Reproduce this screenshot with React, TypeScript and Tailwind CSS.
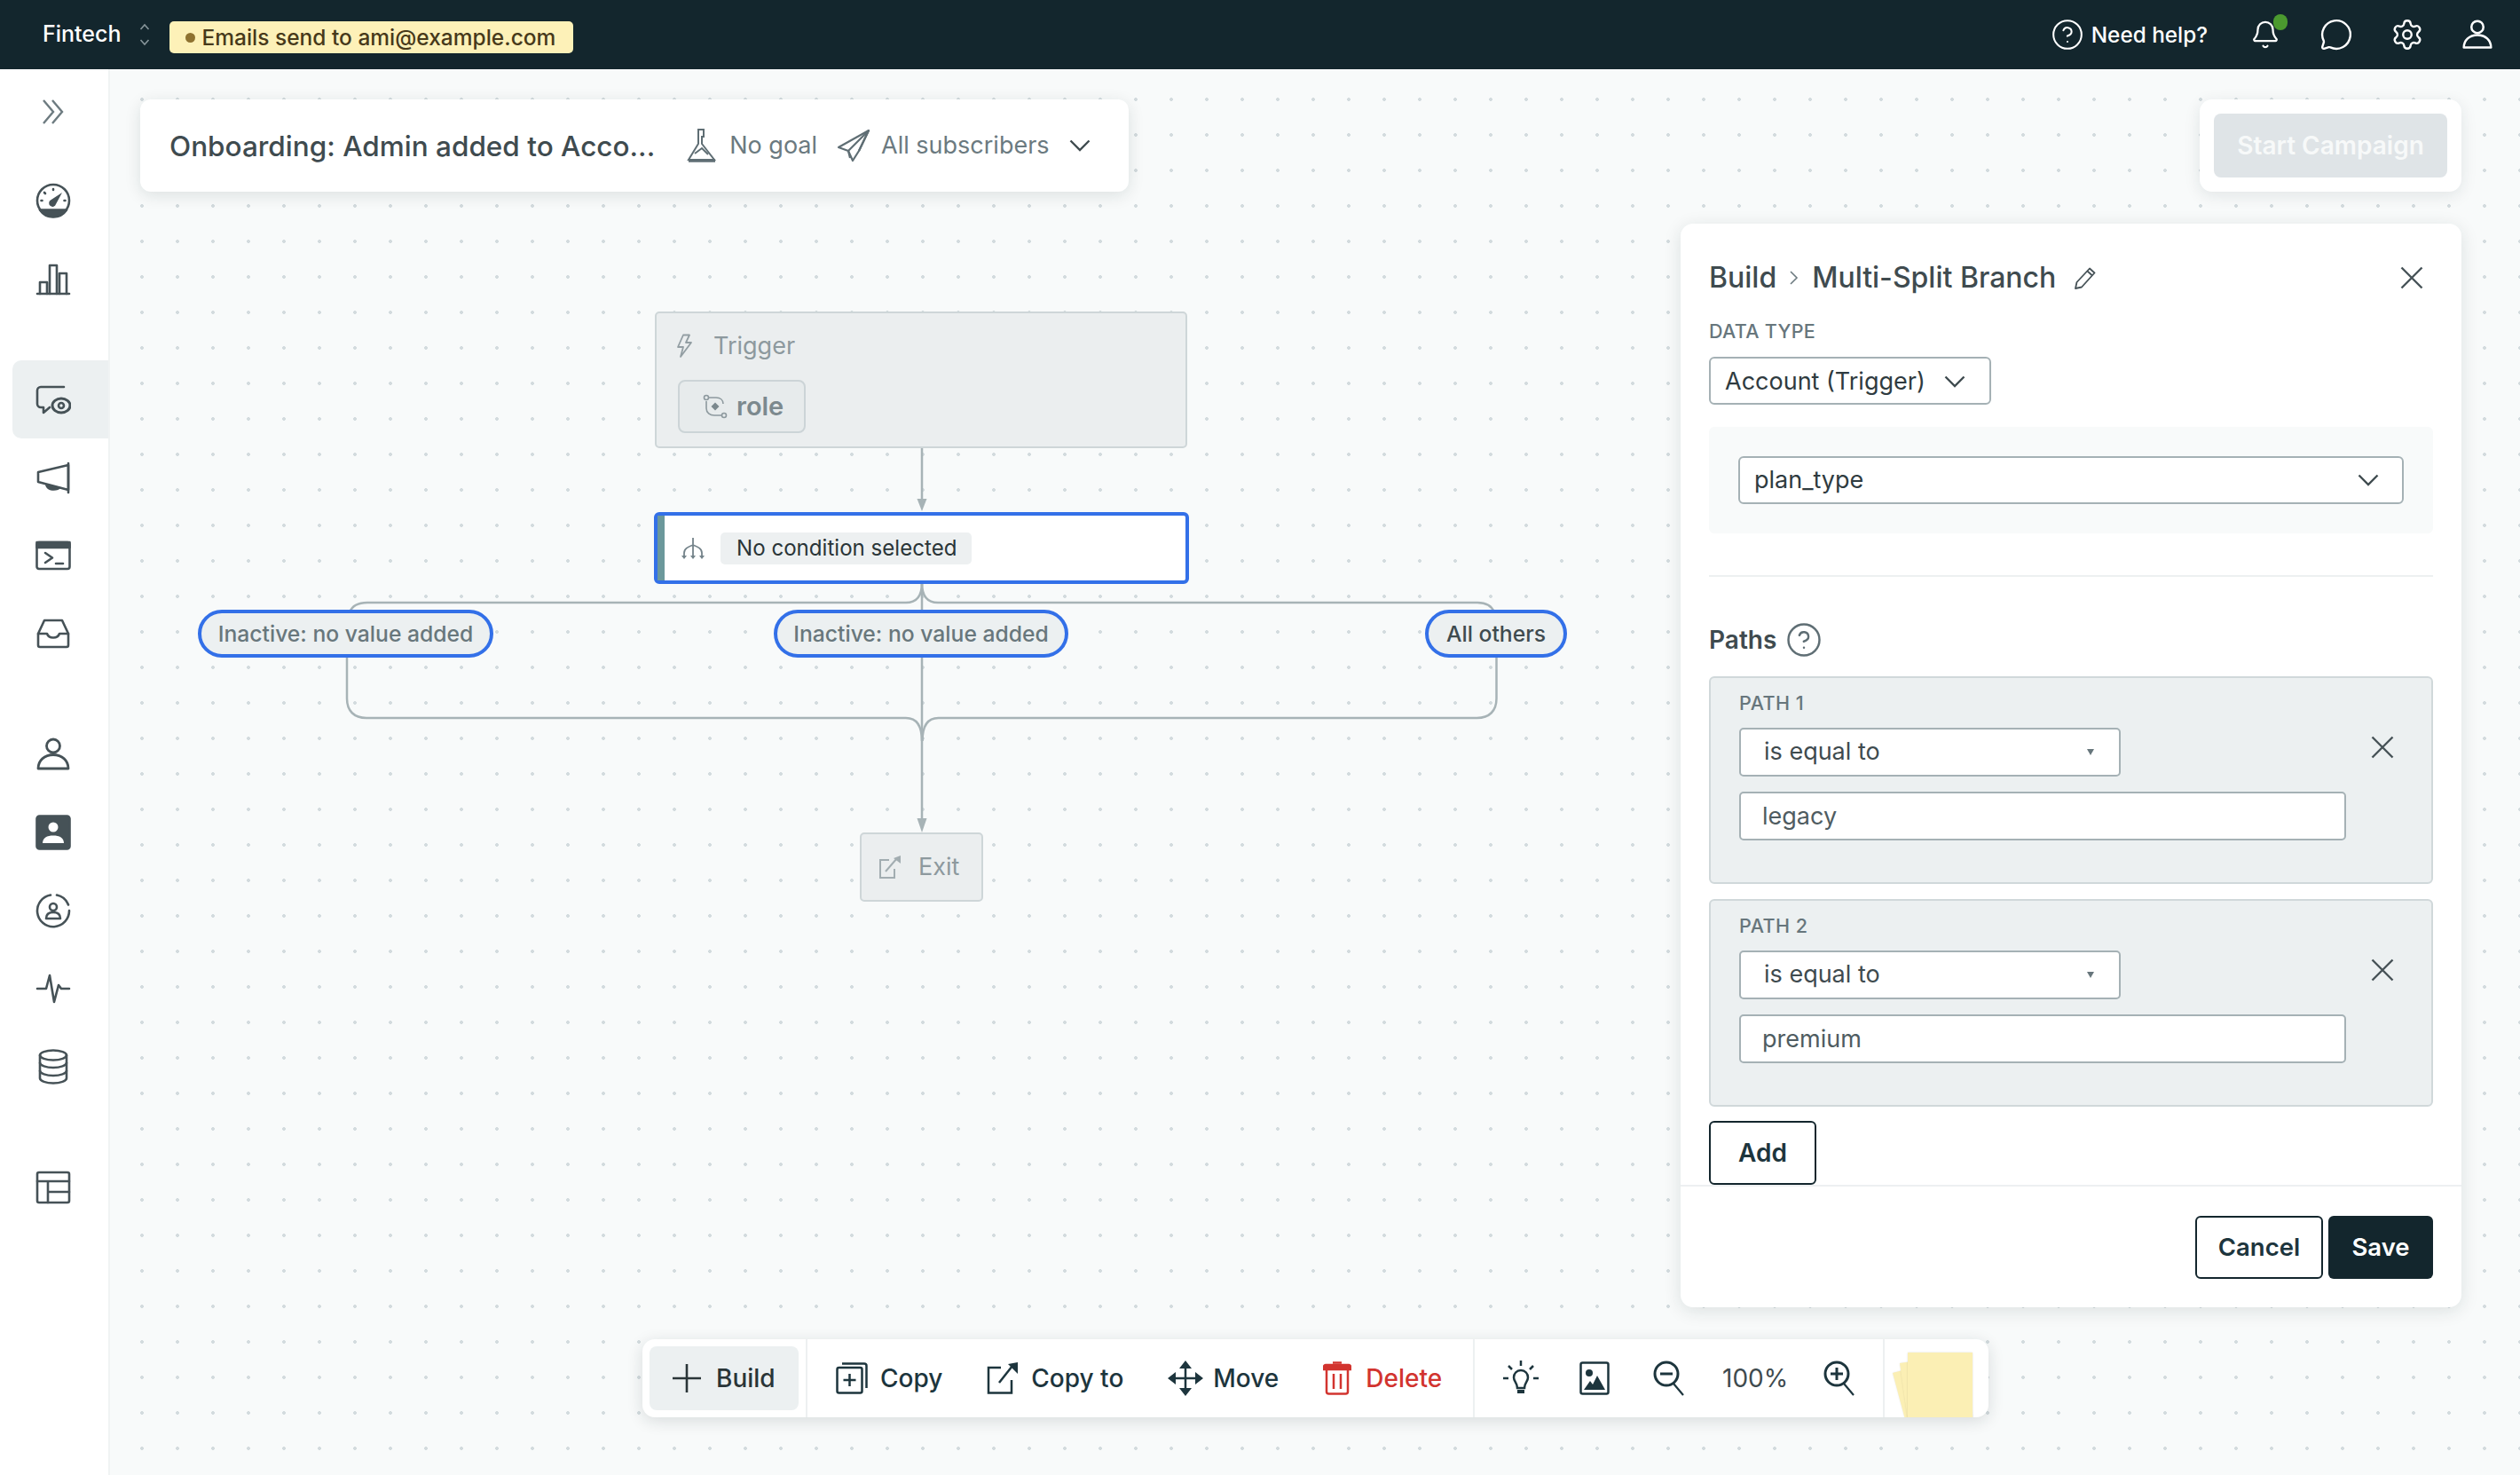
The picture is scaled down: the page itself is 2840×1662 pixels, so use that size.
import { ReactNode } from 'react';
import { Bell, CircleHelp, MessageCircle, Settings } from 'lucide-react';

const NAV = '#465257';
const TOOL = '#1d353d';

function NavSvg({ children }: { children: ReactNode }) {
  return (
    <svg width="40" height="40" viewBox="0 0 40 40" fill="none" stroke={NAV} strokeWidth="2.6" strokeLinecap="round" strokeLinejoin="round">
      {children}
    </svg>
  );
}

function UserGlyph({ size, color }: { size: number; color: string }) {
  return (
    <svg width={size} height={size} viewBox="0 0 40 40" fill="none" stroke={color} strokeWidth="2.8" strokeLinejoin="round">
      <circle cx="20" cy="10.5" r="7.5" />
      <path d="M3 36c0-9 7-15.500 17-15.500s17 6.500 17 15.500z" />
    </svg>
  );
}

const navGroups: ReactNode[][] = [
  [
    <NavSvg key="gauge">
      <circle cx="20" cy="20" r="18" />
      <path d="M5 30.500a18 18 0 0 0 30 0z" fill={NAV} />
      <path d="M30 11 23 24a4 4 0 1 1-6-4.500z" fill={NAV} stroke="none" />
      <path d="M20 7v1M10 11l1 1M6.500 20h1M32.500 20h1" />
    </NavSvg>,
    <NavSvg key="bars">
      <path d="M2 37h36" />
      <path d="M5 37V24h8v13M16 37V5h8v32M27 37V14h8v23" />
    </NavSvg>,
  ],
  [
    <NavSvg key="watch">
      <path d="M32 6H6a4 4 0 0 0-4 4v15a4 4 0 0 0 4 4h3v6l7-6" />
      <ellipse cx="29" cy="27" rx="10" ry="8" strokeWidth="3" fill="#ecf0f1" />
      <circle cx="29" cy="27" r="3" />
    </NavSvg>,
    <NavSvg key="megaphone">
      <path d="M37 4v33" />
      <path d="M3 14 37 6v28L3 25z" />
      <path d="M11 28c1 8 14 9 18 3z" fill={NAV} stroke="none" />
    </NavSvg>,
    <NavSvg key="terminal">
      <rect x="1.500" y="5" width="37" height="30" rx="2.500" />
      <path d="M1.500 5h37v6h-37z" fill={NAV} />
      <path d="m11 17 8 5.500-8 5.500M23 29h8" />
    </NavSvg>,
    <NavSvg key="inbox">
      <path d="M3 20 10 5h20l7 15v13a2 2 0 0 1-2 2H5a2 2 0 0 1-2-2z" />
      <path d="M3 20h10c2 6 12 6 14 0h10" />
    </NavSvg>,
  ],
  [
    <UserGlyph key="user" size={40} color={NAV} />,
    <NavSvg key="contact">
      <rect x="1.500" y="1.500" width="37" height="37" rx="3" fill={NAV} />
      <circle cx="20" cy="14" r="5.500" fill="#fff" stroke="none" />
      <path d="M8 32c0-6 5-8.500 12-8.500S32 26 32 32z" fill="#fff" stroke="none" />
    </NavSvg>,
    <NavSvg key="segment">
      <path d="M17 2.500A18 18 0 1 0 38 20" />
      <path d="M24 2.600A18 18 0 0 1 37 13.500" />
      <circle cx="20" cy="16" r="4" />
      <path d="M12 29c0-5 3-7 8-7s8 2 8 7z" />
    </NavSvg>,
    <NavSvg key="pulse">
      <path d="M2 20h10l4-15 5 30 5-19 3 4h9" />
    </NavSvg>,
    <NavSvg key="db">
      <ellipse cx="20" cy="7" rx="15" ry="5.500" />
      <path d="M5 7v26c0 3 7 5.500 15 5.500S35 36 35 33V7" />
      <path d="M5 15.500c0 3 7 5.500 15 5.500s15-2.500 15-5.500M5 24.500c0 3 7 5.500 15 5.500s15-2.500 15-5.500" />
    </NavSvg>,
  ],
  [
    <NavSvg key="table">
      <rect x="2" y="3" width="36" height="34" rx="2" />
      <path d="M2 13h36M14 13v24M14 25h24" />
    </NavSvg>,
  ],
];

function Sidebar() {
  return (
    <aside className="w-[124px] shrink-0 border-r-2 border-[#f0f3f3] bg-white pt-[4px]">
      <div className="ml-[14px] flex h-[88px] items-center pl-[34px]">
        <svg width="24" height="28" viewBox="0 0 24 28" fill="none" stroke="#6d7b80" strokeWidth="2.4">
          <path d="M1 1l11 13L1 27M11 1l11 13-11 13" />
        </svg>
      </div>
      <div className="mt-[12px] flex flex-col gap-[48px]">
        {navGroups.map((group, g) => (
          <div key={g} className="flex flex-col">
            {group.map((icon, i) => (
              <div
                key={i}
                className={`ml-[14px] flex h-[88px] items-center rounded-l-[10px] pl-[26px] ${g === 1 && i === 0 ? 'bg-[#ecf0f1]' : ''}`}
              >
                {icon}
              </div>
            ))}
          </div>
        ))}
      </div>
    </aside>
  );
}

function TopBar() {
  return (
    <header className="flex h-[78px] shrink-0 items-center bg-[#13262d] pl-[48px] pr-[30px] text-white">
      <span className="text-[25px] font-medium">Fintech</span>
      <svg className="ml-[20px]" width="12" height="26" viewBox="0 0 12 26" fill="none" stroke="#87959a" strokeWidth="1.6">
        <path d="M1.500 7 6 2l4.500 5M1.500 19 6 24l4.500-5" />
      </svg>
      <div className="ml-[22px] mt-[6px] flex h-[36px] w-[455px] items-center rounded-[5px] bg-[#fdf1b8] pl-[18px] text-[24.500px] font-medium text-[#47391a]">
        <span className="mr-[8px] h-[11px] w-[11px] rounded-full bg-[#8f7230]" />
        Emails send to ami@example.com
      </div>
      <div className="ml-auto flex items-center">
        <CircleHelp size={38} strokeWidth={1.3} className="text-white" />
        <span className="ml-[8px] text-[24.300px] font-medium">Need help?</span>
        <div className="relative ml-[48px]">
          <Bell size={34} strokeWidth={1.6} />
          <span className="absolute right-[-8px] top-[-6px] h-[18px] w-[16px] rounded-full bg-[#4b9a2f]" />
        </div>
        <MessageCircle size={38} strokeWidth={1.5} className="ml-[44px]" />
        <Settings size={38} strokeWidth={1.5} className="ml-[42px]" />
        <div className="ml-[42px]">
          <UserGlyph size={36} color="#fff" />
        </div>
      </div>
    </header>
  );
}

function ChevronDown({ color = '#3f4b4f' }: { color?: string }) {
  return (
    <svg width="24" height="14" viewBox="0 0 24 14" fill="none" stroke={color} strokeWidth="2.4">
      <path d="M1.500 1.500 12 12 22.500 1.500" />
    </svg>
  );
}

function CampaignBar() {
  return (
    <div className="absolute left-[158px] top-[112px] flex h-[104px] w-[1114px] items-center rounded-[12px] bg-white pl-[33px] shadow-[0_4px_18px_rgba(19,38,45,0.12)]">
      <span className="pt-[1px] text-[31.500px] font-medium text-[#3f4b4f]">Onboarding: Admin added to Acco...</span>
      <svg className="ml-[34px]" width="38" height="38" viewBox="0 0 38 38" fill="none" stroke="#5f6e74" strokeWidth="2">
        <path d="M15 1h6v8h-2v8l14 18H4l11-18z" />
        <path d="M4 36h30" strokeWidth="3.500" />
        <path d="M11 28l8-6 7 7" />
      </svg>
      <span className="ml-[12px] pt-[1px] text-[27px] text-[#6b7a80]">No goal</span>
      <svg className="ml-[22px]" width="38" height="38" viewBox="0 0 38 38" fill="none" stroke="#5f6e74" strokeWidth="2.200" strokeLinejoin="round">
        <path d="M36 2 2 21l11 4 5 11 7-11z" />
        <path d="M36 2 13 25l2 8M36 2 25 25" />
      </svg>
      <span className="ml-[12px] pt-[1px] text-[27px] text-[#6b7a80]">All subscribers</span>
      <div className="ml-[22px]">
        <ChevronDown />
      </div>
    </div>
  );
}

function StartCampaign() {
  return (
    <div className="absolute left-[2479px] top-[112px] rounded-[14px] bg-white p-[16px] shadow-[0_4px_18px_rgba(19,38,45,0.1)]">
      <div className="flex h-[72px] w-[263px] items-center justify-center rounded-[8px] bg-[#dfe4e7] text-[28px] font-semibold text-[#f7f9f9]">
        Start Campaign
      </div>
    </div>
  );
}

function Connectors() {
  const stroke = '#a7b3b6';
  return (
    <svg className="absolute left-0 top-0" width="2840" height="1662" fill="none" stroke={stroke} strokeWidth="2.500">
      <path d="M1039 504v64" />
      <path d="M1039 576l-5.500-14h11z" fill={stroke} stroke="none" />
      <path d="M1039 657v82" />
      <path d="M1039 657c0 14-6 22-18 22H414c-10 0-17 3-20 11" />
      <path d="M1039 657c0 14 6 22 18 22h608c10 0 16 3 19 11" />
      <path d="M391 739v48c0 14 8 22 22 22h608c11 0 18 7 18 26" />
      <path d="M1686.500 739v48c0 14-8 22-22 22h-607c-11 0-18 7-18 26" />
      <path d="M1039 739v192" />
      <path d="M1039 938l-5.500-16h11z" fill={stroke} stroke="none" />
    </svg>
  );
}

function Pill({ className, label, dark }: { className: string; label: string; dark?: boolean }) {
  return (
    <div
      className={`absolute top-[687px] flex h-[54px] items-center justify-center rounded-full border-[4px] border-[#3370e8] bg-[#ecf0f1] pt-[1px] text-[24.700px] font-medium ${dark ? 'text-[#3f4b4f]' : 'text-[#68777c]'} ${className}`}
    >
      {label}
    </div>
  );
}

function Flow() {
  return (
    <>
      <Connectors />
      <div className="absolute left-[738px] top-[351px] h-[154px] w-[600px] rounded-[5px] border-2 border-[#ced6d8] bg-[#ebeeef] pl-[22px] pt-[20px]">
        <div className="flex h-[34px] items-center text-[#8d999e]">
          <svg width="20" height="28" viewBox="0 0 20 28" fill="none" stroke="#939ea3" strokeWidth="1.800" strokeLinejoin="round">
            <path d="M8 1.500 2 15h6L5 26l12-16h-6l4-8.500z" />
          </svg>
          <span className="ml-[22px] text-[27px]">Trigger</span>
        </div>
        <div className="ml-[2px] mt-[21px] flex h-[60px] w-[144px] items-center rounded-[8px] border-2 border-[#ccd4d7] bg-[#e7ebec] pl-[26px]">
          <svg width="28" height="28" viewBox="0 0 28 28" fill="none" stroke="#8d999e" strokeWidth="1.600">
            <circle cx="4" cy="4" r="2.500" />
            <circle cx="24" cy="24" r="2.500" />
            <path d="M7 4h8c5 0 8 3 8 7M21 24h-8c-5 0-9-3-9-8V8" />
            <path d="M14 9.500l4.500 4.500-4.500 4.500L9.500 14z" fill="#7c898e" stroke="none" />
          </svg>
          <span className="ml-[10px] text-[29px] font-semibold text-[#7c898e]">role</span>
        </div>
      </div>

      <div className="absolute left-[737px] top-[577px] flex h-[81px] w-[603px] items-center rounded-[6px] border-[4px] border-[#3370e8] bg-white">
        <span className="h-full w-[8px] bg-[#6b989b]" />
        <svg className="ml-[19px]" width="26" height="26" viewBox="0 0 26 26" fill="none" stroke="#74838a" strokeWidth="1.800">
          <path d="M13 1v23M3 23v-5c0-5 5-7 10-9 5 2 10 4 10 9v5" />
          <path d="M0 21h6l-3 4zM10 21h6l-3 4zM20 21h6l-3 4z" fill="#74838a" stroke="none" />
        </svg>
        <div className="ml-[18px] flex h-[36px] w-[283px] items-center rounded-[5px] bg-[#edf0f1] pl-[18px] pt-[2px] text-[24.100px] text-[#2a3538]">
          No condition selected
        </div>
      </div>

      <Pill className="left-[223px] w-[333px]" label="Inactive: no value added" />
      <Pill className="left-[872px] w-[332px]" label="Inactive: no value added" />
      <Pill className="left-[1606px] w-[160px]" label="All others" dark />

      <div className="absolute left-[969px] top-[938px] flex h-[78px] w-[139px] items-center rounded-[5px] border-2 border-[#ced6d8] bg-[#ebeeef] pl-[19px]">
        <svg width="26" height="26" viewBox="0 0 26 26" fill="none" stroke="#a2adb1" strokeWidth="2">
          <path d="M12 5H2v20h16V15" />
          <path d="M8 18 21 3" />
          <path d="M25 0v9l-8-6z" fill="#a2adb1" stroke="none" />
        </svg>
        <span className="ml-[19px] text-[27px] text-[#8d999e]">Exit</span>
      </div>
    </>
  );
}

function CloseIcon({ className = '' }: { className?: string }) {
  return (
    <svg className={className} width="26" height="26" viewBox="0 0 26 26" fill="none" stroke="#465257" strokeWidth="2.400">
      <path d="M1.500 1.500l23 23M24.500 1.500l-23 23" />
    </svg>
  );
}

function PathBox({ label, value }: { label: string; value: string }) {
  return (
    <div className="flex h-[234px] rounded-[6px] border-2 border-[#d0d8da] bg-[#ecf0f1] pl-[32px]">
      <div className="flex w-[684px] flex-col pt-[15px]">
        <div className="h-[26px] text-[21.500px] font-medium leading-[26px] tracking-[0.5px] text-[#67767c]">{label}</div>
        <div className="mt-[15px] flex h-[55px] w-[430px] items-center justify-between rounded-[5px] border-2 border-[#a5b1b5] bg-white pl-[26px] pr-[28px] text-[27px] text-[#3f4b4f]">
          is equal to
          <span className="h-0 w-0 border-x-[4px] border-t-[7px] border-x-transparent border-t-[#67767c]" />
        </div>
        <div className="mt-[17px] flex h-[55px] items-center rounded-[5px] border-2 border-[#a5b1b5] bg-white pl-[24px] pt-[2px] text-[27px] text-[#4f5c61]">
          {value}
        </div>
      </div>
      <CloseIcon className="ml-[28px] mt-[65px]" />
    </div>
  );
}

function BuildPanel() {
  return (
    <div className="absolute left-[1894px] top-[252px] flex h-[1221px] w-[880px] flex-col rounded-[14px] bg-white shadow-[0_4px_20px_rgba(19,38,45,0.12)]">
      <div className="flex flex-1 flex-col px-[32px]">
        <div className="mt-[41px] flex h-[40px] items-center text-[32px] font-medium text-[#3f4b4f]">
          <span>Build</span>
          <svg className="mx-[14px]" width="12" height="18" viewBox="0 0 12 18" fill="none" stroke="#6d7b80" strokeWidth="1.600">
            <path d="M2 2l7 7-7 7" />
          </svg>
          <span>Multi-Split Branch</span>
          <svg className="ml-[20px]" width="26" height="26" viewBox="0 0 26 26" fill="none" stroke="#465257" strokeWidth="1.800" strokeLinejoin="round">
            <path d="M18 2.500l5.500 5L9 23.500l-7 1.500 1.500-7zM15.500 5.500l5.500 5" />
          </svg>
          <CloseIcon className="ml-auto mr-[11px]" />
        </div>
        <div className="mt-[27px] h-[26px] text-[21.500px] font-medium leading-[26px] tracking-[0.3px] text-[#67767c]">DATA TYPE</div>
        <div className="mt-[16px] flex h-[54px] w-[318px] items-center rounded-[6px] border-2 border-[#a5b1b5] bg-white pl-[16px] pt-[2px] text-[27px] text-[#2f3b40]">
          Account (Trigger)
          <div className="ml-auto mr-[27px]">
            <ChevronDown />
          </div>
        </div>
        <div className="mt-[25px] h-[120px] rounded-[6px] bg-[#f8fafa] px-[33px] pt-[33px]">
          <div className="flex h-[54px] items-center justify-between rounded-[6px] border-2 border-[#a5b1b5] bg-white pl-[16px] pr-[26px] text-[27px] text-[#2f3b40]">
            plan_type
            <ChevronDown />
          </div>
        </div>
        <div className="mt-[47px] h-[2px] bg-[#edf0f1]" />
        <div className="mt-[52px] flex h-[38px] items-center text-[28px] font-semibold text-[#3f4b4f]">
          Paths
          <CircleHelp size={42} strokeWidth={1.400} className="ml-[10px] text-[#5f6e74]" />
        </div>
        <div className="mt-[22px] flex flex-col gap-[17px]">
          <PathBox label="PATH 1" value="legacy" />
          <PathBox label="PATH 2" value="premium" />
        </div>
        <div className="mt-[16px] flex h-[72px] w-[121px] items-center justify-center rounded-[6px] border-2 border-[#13262d] bg-white text-[28px] font-semibold text-[#1d353d]">
          Add
        </div>
      </div>
      <div className="flex h-[138px] justify-end gap-[6px] border-t-2 border-[#edf0f1] px-[32px] pt-[33px]">
        <div className="flex h-[71px] w-[144px] items-center justify-center rounded-[6px] border-2 border-[#13262d] text-[27.500px] font-semibold text-[#1d353d]">
          Cancel
        </div>
        <div className="flex h-[71px] w-[118px] items-center justify-center rounded-[6px] bg-[#13262d] text-[27.500px] font-semibold text-white">
          Save
        </div>
      </div>
    </div>
  );
}

function ToolItem({ icon, label, red, gap = 'gap-[14px]' }: { icon: ReactNode; label: string; red?: boolean; gap?: string }) {
  return (
    <div className={`flex items-center ${gap}`}>
      {icon}
      <span className={`text-[28px] font-medium ${red ? 'text-[#d2342f]' : 'text-[#1d353d]'}`}>{label}</span>
    </div>
  );
}

function Toolbar() {
  const common = { fill: 'none', stroke: TOOL, strokeWidth: 2.5 };
  return (
    <div className="absolute left-[724px] top-[1509px] flex h-[88px] w-[1517px] overflow-hidden rounded-[14px] bg-white shadow-[0_4px_18px_rgba(19,38,45,0.14)]">
      <div className="flex w-[186px] shrink-0 items-center border-r-2 border-[#edf0f1] pl-[8px]">
        <div className="flex h-[72px] w-[168px] items-center rounded-[8px] bg-[#ecf0f1] pl-[26px] text-[28px] font-medium text-[#2a3538]">
          <svg width="32" height="32" viewBox="0 0 32 32" fill="none" stroke="#2a3538" strokeWidth="2.600">
            <path d="M16 0v32M0 16h32" />
          </svg>
          <span className="ml-[17px]">Build</span>
        </div>
      </div>

      <div className="flex w-[752px] shrink-0 items-center gap-[50px] border-r-2 border-[#edf0f1] pl-[32px]">
        <ToolItem
          label="Copy"
          icon={
            <svg width="36" height="36" viewBox="0 0 36 36" {...common}>
              <rect x="1.500" y="6" width="28" height="28.500" rx="2" />
              <path d="M7 1.500h25a2.500 2.500 0 0 1 2.500 2.500v25" />
              <path d="M15.500 13v14M8.500 20h14" />
            </svg>
          }
        />
        <ToolItem
          label="Copy to"
          icon={
            <svg width="36" height="36" viewBox="0 0 36 36" {...common}>
              <path d="M16 6H2v28.500h26V20" />
              <path d="M14 23 29 4" />
              <path d="M35 0v13L24 2z" fill={TOOL} stroke="none" />
            </svg>
          }
        />
        <ToolItem
          label="Move"
          gap="gap-[11px]"
          icon={
            <svg width="40" height="40" viewBox="0 0 40 40" {...common}>
              <path d="M20 5v30M5 20h30" />
              <path d="M20 0l7 9H13zM20 40l-7-9h14zM0 20l9-7v14zM40 20l-9 7V13z" fill={TOOL} stroke="none" />
            </svg>
          }
        />
        <ToolItem
          label="Delete"
          red
          gap="gap-[16px]"
          icon={
            <svg width="32" height="38" viewBox="0 0 32 38" fill="none" stroke="#d2342f" strokeWidth="2.500">
              <path d="M4 9v25c0 1.500 1 2.500 2.500 2.500h19c1.500 0 2.500-1 2.500-2.500V9" />
              <path d="M1 9V6c0-1 1-2 2-2h26c1 0 2 1 2 2v3z" fill="#d2342f" />
              <path d="M11 1.500h10M12 14v17M20 14v17" />
            </svg>
          }
        />
      </div>

      <div className="flex w-[462px] shrink-0 items-center border-r-2 border-[#edf0f1] pl-[32px]">
        <svg width="40" height="40" viewBox="0 0 40 40" {...common}>
          <path d="M20 0v6M6 6l4 4M34 6l-4 4M0 20h6M34 20h6" />
          <path d="M20 11c-5 0-8 4-8 8 0 5 4 6 4 12h8c0-6 4-7 4-12 0-4-3-8-8-8z" />
          <path d="M16 35h8" strokeWidth="4" />
        </svg>
        <svg className="ml-[46px]" width="34" height="38" viewBox="0 0 34 38" {...common}>
          <rect x="1.500" y="1.500" width="31" height="35" rx="2" />
          <circle cx="11" cy="13" r="4" fill={TOOL} stroke="none" />
          <path d="M5 32l7-10 3 4 5-10 9 16z" fill={TOOL} stroke="none" />
        </svg>
        <svg className="ml-[49px]" width="36" height="40" viewBox="0 0 36 40" {...common} strokeWidth={3}>
          <circle cx="15" cy="15" r="13" />
          <path d="M8 15h14" />
          <path d="M23 26 34 39" strokeWidth={2.2} />
        </svg>
        <span className="ml-[42px] w-[72px] text-[28px] text-[#3f4b4f]">100%</span>
        <svg className="ml-[42px]" width="36" height="40" viewBox="0 0 36 40" {...common} strokeWidth={3}>
          <circle cx="15" cy="15" r="13" />
          <path d="M8 15h14M15 8v14" />
          <path d="M23 26 34 39" strokeWidth={2.2} />
        </svg>
      </div>

      <div className="relative flex-1">
        <span className="absolute left-[9px] top-[38px] h-[73px] w-[73px] origin-top-left rotate-[-15deg] bg-[#fbefb4] shadow-[0_0_2px_rgba(0,0,0,0.1)]" />
        <span className="absolute left-[17px] top-[27px] h-[73px] w-[73px] origin-top-left rotate-[-8deg] bg-[#fbefb4] shadow-[0_0_2px_rgba(0,0,0,0.1)]" />
        <span className="absolute left-[26px] top-[15px] h-[73px] w-[73px] bg-[#fbefb4] shadow-[0_0_2px_rgba(0,0,0,0.12)]" />
      </div>
    </div>
  );
}

export default function App() {
  return (
    <div className="relative flex h-[1662px] w-[2840px] flex-col overflow-hidden bg-white [font-family:Inter,sans-serif]">
      <TopBar />
      <div className="flex flex-1">
        <Sidebar />
        <main className="flex-1 bg-[#f8fafa] bg-[radial-gradient(circle,#d3dbde_1.7px,transparent_2.2px)] bg-[length:40px_40px] bg-[position:16px_14px]" />
      </div>
      <Flow />
      <CampaignBar />
      <StartCampaign />
      <BuildPanel />
      <Toolbar />
    </div>
  );
}
